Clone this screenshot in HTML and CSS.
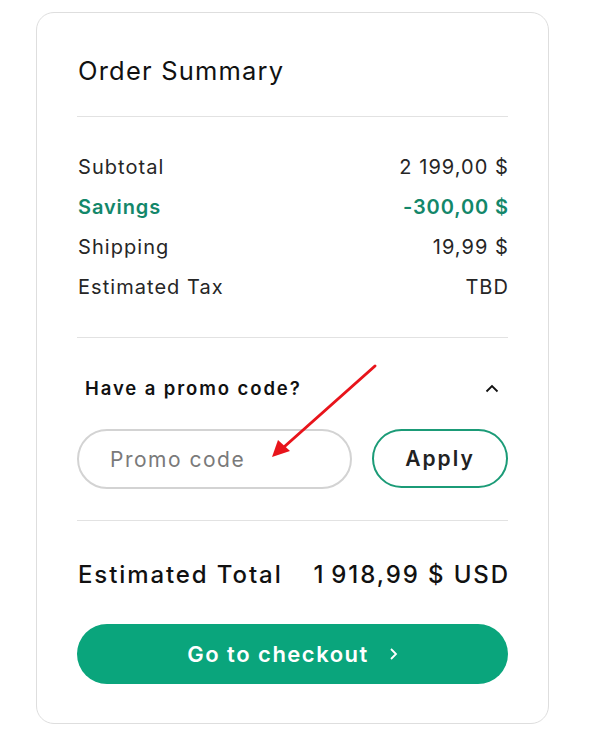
FILE: index.html
```html
<!DOCTYPE html>
<html lang="en">
<head>
<meta charset="utf-8">
<title>Order Summary</title>
<link rel="stylesheet" href="styles.css">
</head>
<body>
<div class="card">
  <div class="header">
    <h2 class="title">Order Summary</h2>
  </div>
  <div class="rows">
    <div class="row"><span>Subtotal</span><span>2&nbsp;199,00 $</span></div>
    <div class="row savings"><span>Savings</span><span>-300,00 $</span></div>
    <div class="row"><span>Shipping</span><span>19,99 $</span></div>
    <div class="row"><span>Estimated Tax</span><span>TBD</span></div>
  </div>
  <div class="promo">
    <div class="promo-head">
      <span>Have a promo code?</span>
      <svg class="chev-up" width="14" height="9" viewBox="0 0 14 9"><path d="M1.5 7.5 L7 2 L12.5 7.5" fill="none" stroke="#111" stroke-width="1.8"/></svg>
    </div>
    <div class="promo-form">
      <input class="promo-input" type="text" placeholder="Promo code">
      <button class="apply">Apply</button>
    </div>
  </div>
  <div class="total">
    <div class="total-row"><span>Estimated Total</span><span>1&#8239;918,99 $ USD</span></div>
    <button class="checkout">Go to checkout
      <svg class="chev-right" width="9" height="14" viewBox="0 0 9 14"><path d="M2 2 L7 7 L2 12" fill="none" stroke="#fff" stroke-width="1.8"/></svg>
    </button>
  </div>
  <svg class="annot" width="601" height="744" viewBox="0 0 601 744">
    <line x1="375" y1="366" x2="284" y2="447" stroke="#e8141b" stroke-width="3" stroke-linecap="round"/>
    <path d="M272 457 L278 440 L290 451 Z" fill="#e8141b"/>
  </svg>
</div>
</body>
</html>
```
FILE: styles.css
```css
* { box-sizing: border-box; }
html, body { margin: 0; padding: 0; background: #fff; }
body {
  font-family: Inter, "Liberation Sans", Arial, sans-serif;
  color: #262626;
  width: 601px;
  height: 744px;
  overflow: hidden;
}
.card {
  margin: 12px 0 0 36px;
  width: 513px;
  height: 712px;
  border: 1px solid #dedede;
  border-radius: 18px;
  padding: 0 40px;
  display: flex;
  flex-direction: column;
}
.header {
  padding: 40px 0 27px;
  border-bottom: 1px solid #e2e2e2;
}
.title {
  margin: 0;
  font-size: 25.5px;
  line-height: 36px;
  font-weight: 400;
  color: #111;
  letter-spacing: 1.2px;
  padding-left: 1px;
}
.rows {
  padding: 30px 0;
  border-bottom: 1px solid #e2e2e2;
}
.row {
  display: flex;
  justify-content: space-between;
  height: 40px;
  align-items: center;
  font-size: 20px;
  letter-spacing: 1.05px;
  padding-left: 1px;
}
.row span:last-child { margin-right: -1px; }
.savings { color: #13876a; font-weight: 600; letter-spacing: 0.9px; }
.promo {
  padding: 30px 0 31px;
  border-bottom: 1px solid #e2e2e2;
}
.promo-head {
  display: flex;
  justify-content: space-between;
  align-items: center;
  height: 40px;
  padding-left: 8px;
  padding-right: 9px;
  font-size: 18.5px;
  font-weight: 600;
  color: #111;
  letter-spacing: 1.9px;
}
.promo-form {
  display: flex;
  gap: 20px;
  margin-top: 21px;
}
.promo-input {
  width: 275px;
  height: 60px;
  border: 2px solid #d3d3d3;
  border-radius: 30px;
  padding: 0 0 0 31px;
  font: inherit;
  font-size: 21px;
  letter-spacing: 1.5px;
  color: #222;
  outline: none;
}
.promo-input::placeholder { color: #7a7a7a; }
.apply {
  flex: 1;
  height: 59px;
  border: 2px solid #1b9b77;
  border-radius: 30px;
  background: #fff;
  font: inherit;
  font-size: 21px;
  font-weight: 600;
  color: #222;
  letter-spacing: 2px;
  cursor: pointer;
}
.total {
  padding-top: 35px;
}
.total-row {
  display: flex;
  justify-content: space-between;
  align-items: center;
  height: 36px;
  font-size: 24px;
  font-weight: 500;
  color: #111;
  letter-spacing: 1.9px;
  padding-left: 1px;
}
.total-row span:last-child { margin-right: -2px; }
.checkout {
  margin-top: 32px;
  width: 100%;
  height: 60px;
  border: none;
  border-radius: 30px;
  background: #0aa57c;
  color: #fff;
  font: inherit;
  font-size: 22px;
  font-weight: 600;
  letter-spacing: 1.5px;
  display: flex;
  align-items: center;
  justify-content: center;
  gap: 20px;
  cursor: pointer;
}
.annot {
  position: absolute;
  left: 0;
  top: 0;
  pointer-events: none;
}
```
